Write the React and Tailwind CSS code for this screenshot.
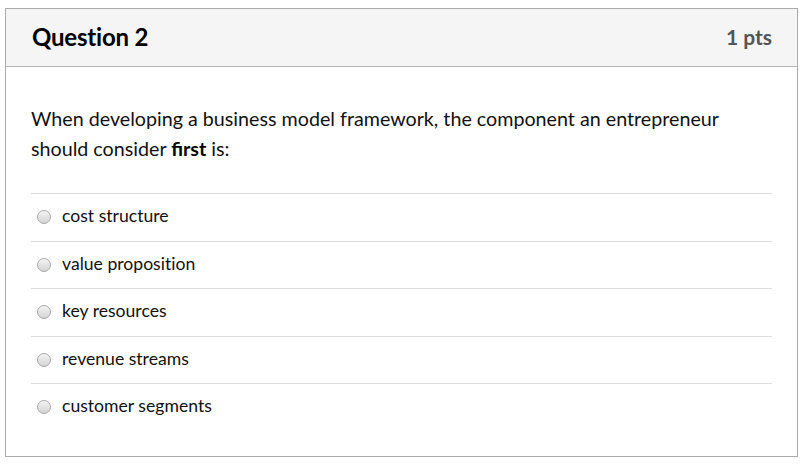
import React from "react";

const options = [
  "cost structure",
  "value proposition",
  "key resources",
  "revenue streams",
  "customer segments",
];

function Radio() {
  return (
    <span className="w-[14px] h-[14px] rounded-full border border-[#a9a9a9] bg-gradient-to-b from-[#f4f4f4] to-[#d4d4d4] shrink-0" />
  );
}

export default function App() {
  return (
    <div
      className="w-[810px] h-[466px] bg-white pt-[8px] pl-[5px]"
      style={{ fontFamily: "Lato, 'Open Sans', sans-serif" }}
    >
      <div className="w-[793px] h-[449px] border border-[#aaaaaa] flex flex-col">
        <div className="h-[58px] bg-[#f5f5f5] border-b border-[#b5b5b5] flex items-center justify-between pl-[26px] pr-[25px]">
          <h2 className="text-[24px] font-bold text-black tracking-[-0.2px] -mt-[2px]">Question 2</h2>
          <span className="text-[21px] font-bold text-[#555555] -mt-[2px]">1 pts</span>
        </div>
        <div className="pl-[25px] pr-[25px] pt-[37px]">
          <p className="text-[19.7px] leading-[30px] text-[#111111]">
            When developing a business model framework, the component an entrepreneur
            <br />
            should consider <strong className="font-bold text-black">first</strong> is:
          </p>
          <div className="mt-[29px]">
            {options.map((o) => (
              <div
                key={o}
                className="h-[47.5px] border-t border-[#dddddd] flex items-center pl-[6px] gap-[11px]"
              >
                <Radio />
                <span className="text-[17.6px] text-[#111111] [font-variant-ligatures:none] -mt-[2px]">{o}</span>
              </div>
            ))}
          </div>
        </div>
      </div>
    </div>
  );
}
